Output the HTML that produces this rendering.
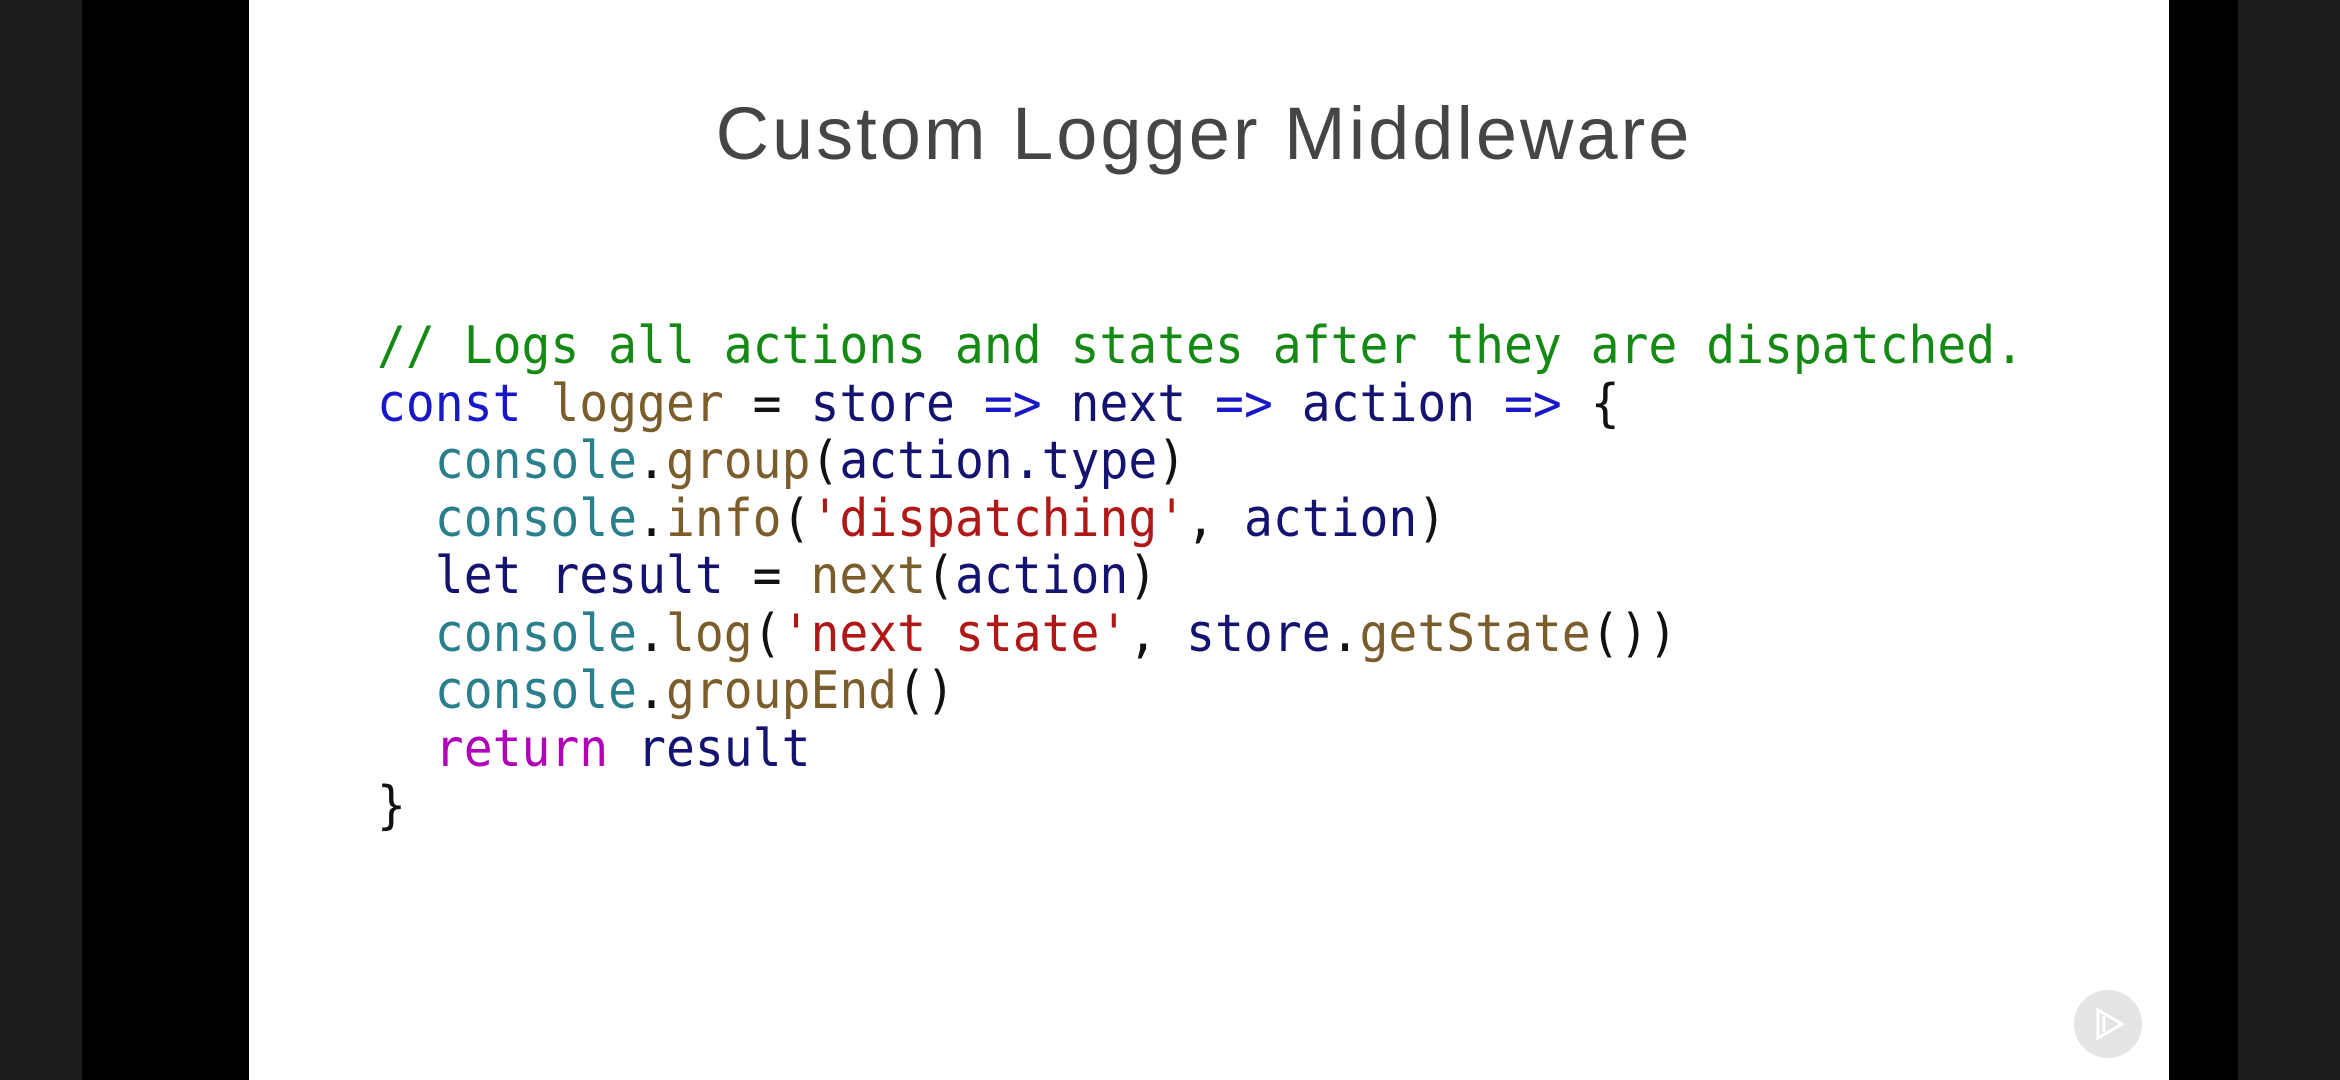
<!DOCTYPE html>
<html><head><meta charset="utf-8"><style>
html,body{margin:0;padding:0;width:2340px;height:1080px;overflow:hidden;background:#000;}
.l{position:absolute;left:0;top:0;width:82px;height:1080px;background:#1c1c1c;}
.r{position:absolute;left:2238px;top:0;width:102px;height:1080px;background:#1c1c1c;}
.s{position:absolute;left:249px;top:0;width:1920px;height:1080px;background:#fff;}
.t{position:absolute;left:34px;width:2340px;top:91px;text-align:center;font:300 74px "Liberation Sans",sans-serif;color:#454545;letter-spacing:3px;}
pre{position:absolute;left:377px;top:318px;margin:0;font:52px/57.5px "DejaVu Sans Mono","Liberation Mono",monospace;color:#111;transform:scaleX(0.923);transform-origin:0 0;}
.c{color:#148a14}.k{color:#1818c8}.f{color:#7b5d2c}.v{color:#141470}.o{color:#2a7f8c}.st{color:#b01818}.m{color:#b000b8}
.p{position:absolute;left:2074px;top:990px;width:68px;height:68px;border-radius:50%;background:#e4e4e4;}
</style></head><body>
<div class="l"></div><div class="r"></div><div class="s"></div>
<div class="t">Custom Logger Middleware</div>
<pre><span class="c">// Logs all actions and states after they are dispatched.</span>
<span class="k">const</span> <span class="f">logger</span> = <span class="v">store</span> <span class="k">=&gt;</span> <span class="v">next</span> <span class="k">=&gt;</span> <span class="v">action</span> <span class="k">=&gt;</span> {
  <span class="o">console</span>.<span class="f">group</span>(<span class="v">action.type</span>)
  <span class="o">console</span>.<span class="f">info</span>(<span class="st">'dispatching'</span>, <span class="v">action</span>)
  <span class="v">let</span> <span class="v">result</span> = <span class="f">next</span>(<span class="v">action</span>)
  <span class="o">console</span>.<span class="f">log</span>(<span class="st">'next state'</span>, <span class="v">store</span>.<span class="f">getState</span>())
  <span class="o">console</span>.<span class="f">groupEnd</span>()
  <span class="m">return</span> <span class="v">result</span>
}</pre>
<div class="p"><svg width="68" height="68" viewBox="0 0 68 68"><path d="M24 20 L48 34 L24 48 Z M30 26 L30 42 M24 20 L24 48" fill="none" stroke="#fff" stroke-width="3"/></svg></div>
</body></html>
